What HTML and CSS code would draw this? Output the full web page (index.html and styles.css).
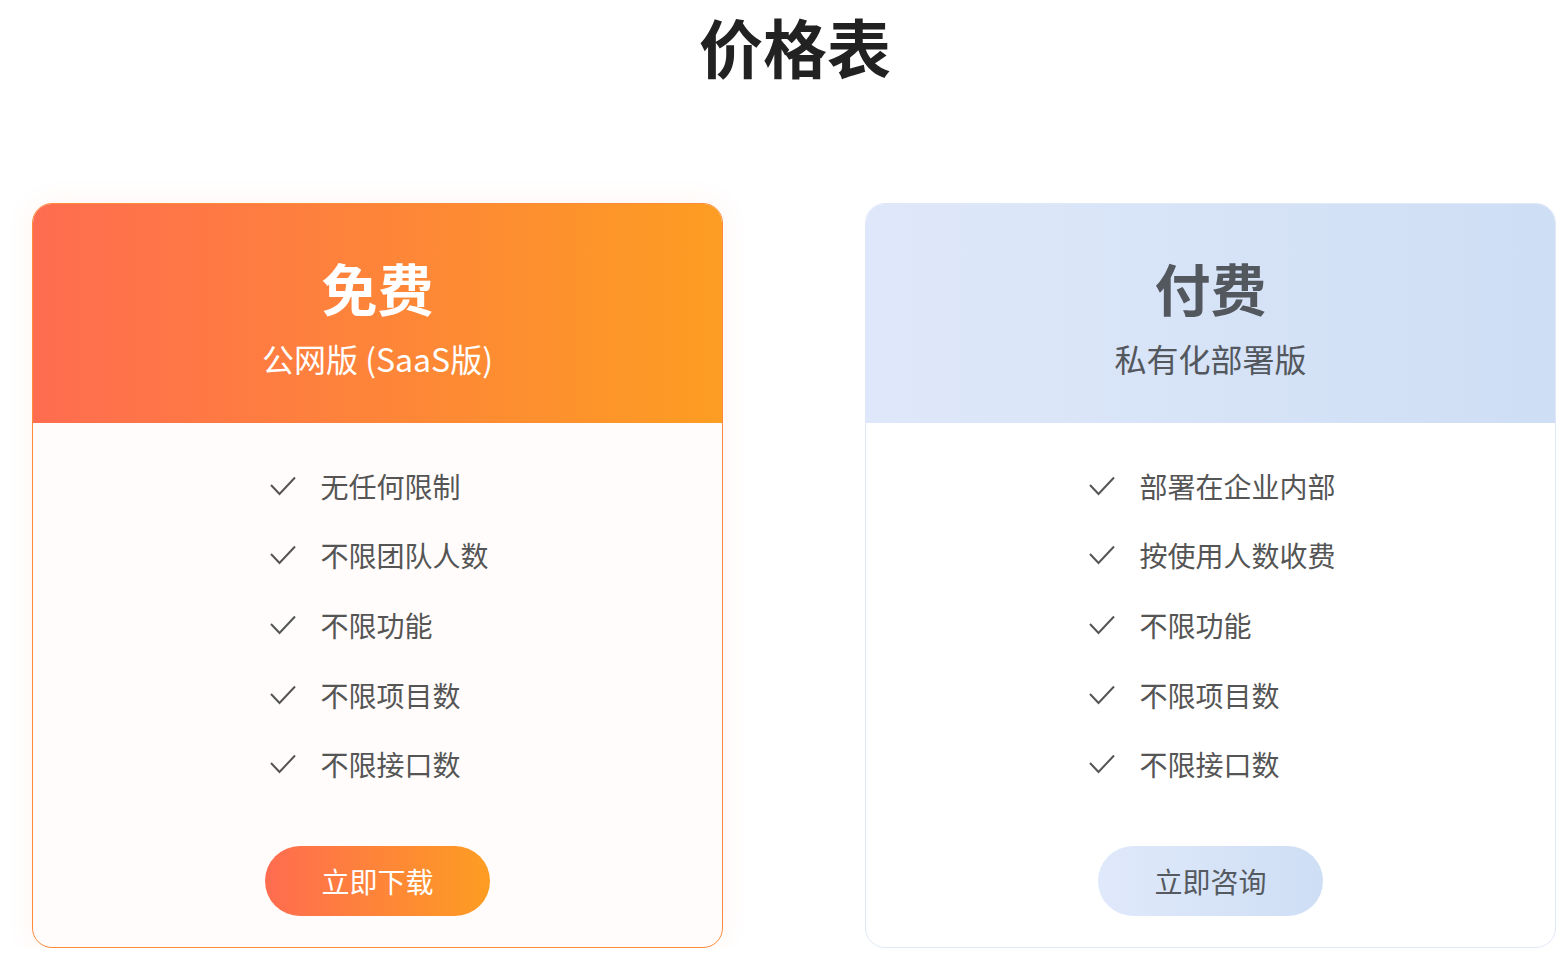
FILE: index.html
```html
<!DOCTYPE html>
<html lang="zh-CN">
<head>
<meta charset="utf-8">
<title>价格表</title>
<link rel="stylesheet" href="styles.css">
</head>
<body>
<h1 class="page-title">价格表</h1>
<div class="plans">
  <div class="card card-free">
    <div class="card-head">
      <div class="plan-name">免费</div>
      <div class="plan-sub">公网版 (SaaS版)</div>
    </div>
    <div class="card-body">
      <ul class="features">
        <li><svg class="check" viewBox="0 0 26 20"><polyline points="1,9 9.5,18 25,1.5"/></svg>无任何限制</li>
        <li><svg class="check" viewBox="0 0 26 20"><polyline points="1,9 9.5,18 25,1.5"/></svg>不限团队人数</li>
        <li><svg class="check" viewBox="0 0 26 20"><polyline points="1,9 9.5,18 25,1.5"/></svg>不限功能</li>
        <li><svg class="check" viewBox="0 0 26 20"><polyline points="1,9 9.5,18 25,1.5"/></svg>不限项目数</li>
        <li><svg class="check" viewBox="0 0 26 20"><polyline points="1,9 9.5,18 25,1.5"/></svg>不限接口数</li>
      </ul>
      <a class="btn btn-free">立即下载</a>
    </div>
  </div>
  <div class="card card-paid">
    <div class="card-head">
      <div class="plan-name">付费</div>
      <div class="plan-sub">私有化部署版</div>
    </div>
    <div class="card-body">
      <ul class="features">
        <li><svg class="check" viewBox="0 0 26 20"><polyline points="1,9 9.5,18 25,1.5"/></svg>部署在企业内部</li>
        <li><svg class="check" viewBox="0 0 26 20"><polyline points="1,9 9.5,18 25,1.5"/></svg>按使用人数收费</li>
        <li><svg class="check" viewBox="0 0 26 20"><polyline points="1,9 9.5,18 25,1.5"/></svg>不限功能</li>
        <li><svg class="check" viewBox="0 0 26 20"><polyline points="1,9 9.5,18 25,1.5"/></svg>不限项目数</li>
        <li><svg class="check" viewBox="0 0 26 20"><polyline points="1,9 9.5,18 25,1.5"/></svg>不限接口数</li>
      </ul>
      <a class="btn btn-paid">立即咨询</a>
    </div>
  </div>
</div>
</body>
</html>
```

FILE: styles.css
```css
* { box-sizing: border-box; }
html, body {
  margin: 0;
  padding: 0;
  background: #ffffff;
  font-family: "Noto Sans CJK SC", "Noto Sans", "Liberation Sans", sans-serif;
}
.page-title {
  margin: 0;
  padding-top: 13px;
  font-size: 64px;
  line-height: 64px;
  font-weight: 700;
  color: #222222;
  text-align: center;
  padding-left: 24px;
}
.plans {
  display: flex;
  gap: 142px;
  padding-left: 32px;
  margin-top: 126px;
}
.card {
  width: 691px;
  border-radius: 20px;
  border: 1px solid #fe8a3a;
  overflow: hidden;
}
.card-free {
  background: #fffcfb;
  box-shadow: 0 0 28px rgba(255, 120, 60, 0.08);
}
.card-paid {
  background: #ffffff;
  border-color: #e0e8f8;
}
.card-head {
  height: 219px;
  padding-top: 55px;
  text-align: center;
}
.card-free .card-head {
  background: linear-gradient(90deg, #ff6c50 0%, #fd9d22 100%);
  color: #ffffff;
}
.card-paid .card-head {
  background: linear-gradient(90deg, #dfe8fa 0%, #cedef4 100%);
  color: #53575e;
}
.plan-name {
  font-size: 56px;
  line-height: 56px;
  font-weight: 700;
}
.plan-sub {
  margin-top: 27px;
  font-size: 32px;
  line-height: 32px;
  font-weight: 400;
}
.card-body {
  display: flex;
  flex-direction: column;
  align-items: center;
  padding: 28px 0 31px;
}
.features {
  list-style: none;
  margin: 0;
  padding: 0 0 0 4px;
}
.features li {
  display: flex;
  align-items: center;
  height: 69.6px;
  font-size: 28px;
  color: #555555;
}
.check {
  width: 26px;
  height: 20px;
  margin-right: 24px;
  fill: none;
  stroke: #555555;
  stroke-width: 2;
}
.btn {
  display: flex;
  align-items: center;
  justify-content: center;
  margin-top: 47px;
  width: 225px;
  height: 70px;
  border-radius: 35px;
  font-size: 28px;
  cursor: pointer;
}
.btn-free {
  background: linear-gradient(90deg, #ff6c50 0%, #fd9d22 100%);
  color: #ffffff;
}
.btn-paid {
  background: linear-gradient(90deg, #e0e9fb 0%, #cedef4 100%);
  color: #555a60;
}
```
